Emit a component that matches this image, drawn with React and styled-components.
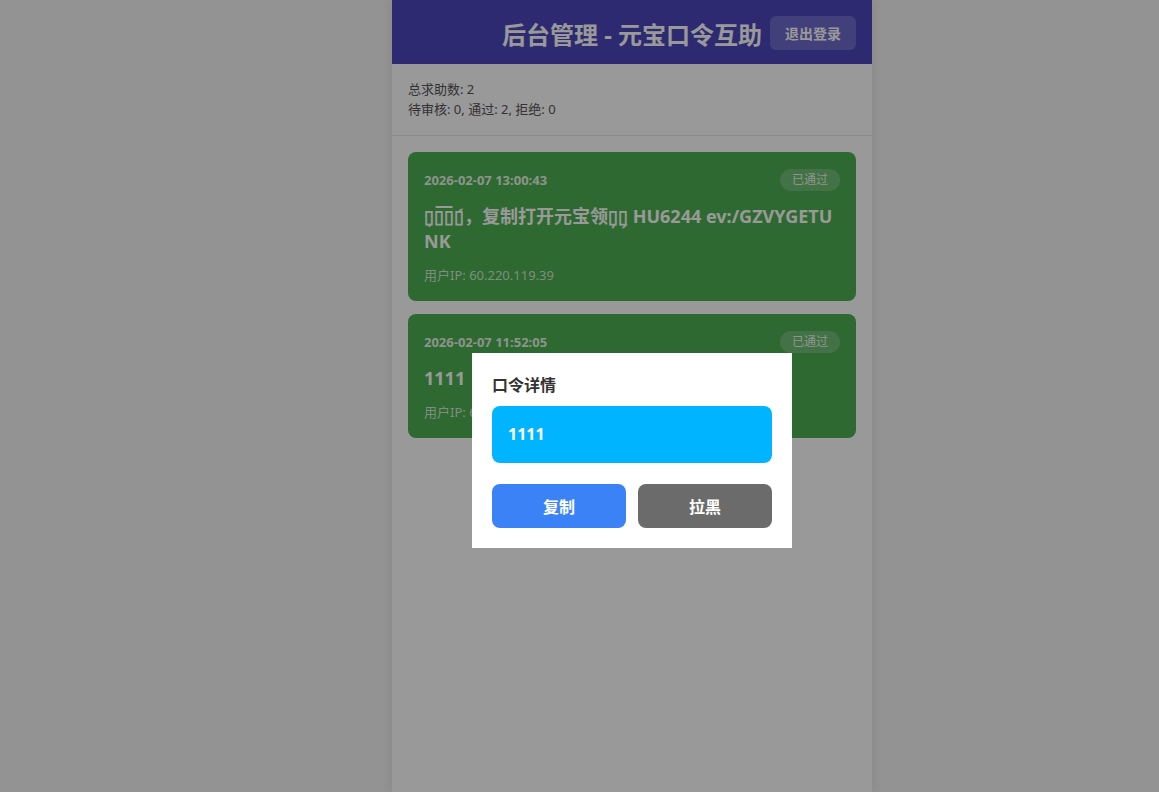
import React, { useState } from 'react';
import styled, { createGlobalStyle } from 'styled-components';

const GlobalStyle = createGlobalStyle`
  html, body {
    margin: 0;
    padding: 0;
    overflow: hidden;
    background: #f5f5f5;
  }
  * {
    box-sizing: border-box;
  }
  body {
    font-family: "Noto Sans", "Noto Sans CJK SC", sans-serif;
  }
`;

const requests = [
  {
    id: 1,
    time: '2026-02-07 13:00:43',
    content: '▯̣▯͞▯▯́，复制打开元宝领▯̦▯̗ HU6244 ev:/GZVYGETUNK',
    ip: '60.220.119.39',
    status: '已通过',
  },
  {
    id: 2,
    time: '2026-02-07 11:52:05',
    content: '1111',
    ip: '60.220.119.39',
    status: '已通过',
  },
];

const App = () => {
  const [selected, setSelected] = useState(requests[1]);

  return (
    <>
      <GlobalStyle />
      <Page>
        <Container>
          <Header>
            <Title>后台管理 - 元宝口令互助</Title>
            <LogoutButton>退出登录</LogoutButton>
          </Header>
          <Stats>
            <div>总求助数: 2</div>
            <div>待审核: 0, 通过: 2, 拒绝: 0</div>
          </Stats>
          <List>
            {requests.map((item) => (
              <Card key={item.id} onClick={() => setSelected(item)}>
                <CardTop>
                  <Time>{item.time}</Time>
                  <Badge>{item.status}</Badge>
                </CardTop>
                <Content>{item.content}</Content>
                <Ip>用户IP: {item.ip}</Ip>
              </Card>
            ))}
          </List>
        </Container>
      </Page>
      {selected && (
        <Overlay onClick={() => setSelected(null)}>
          <Modal onClick={(e) => e.stopPropagation()}>
            <ModalTitle>口令详情</ModalTitle>
            <CodeBox>{selected.content}</CodeBox>
            <Actions>
              <ActionButton $color="#3b82f6">复制</ActionButton>
              <ActionButton $color="#6b6b6b">拉黑</ActionButton>
            </Actions>
          </Modal>
        </Overlay>
      )}
    </>
  );
};

const Page = styled.div`
  width: 1264px;
  min-height: 100vh;
`;

const Container = styled.div`
  width: 480px;
  min-height: 100vh;
  margin: 0 auto;
  background: #fff;
  box-shadow: 0 0 10px rgba(0, 0, 0, 0.1);
`;

const Header = styled.div`
  position: relative;
  height: 64px;
  display: flex;
  align-items: center;
  justify-content: center;
  background: #4c46be;
  color: #fff;
`;

const Title = styled.h1`
  margin: 0;
  font-size: 24px;
  font-weight: 700;
  line-height: 32px;
  padding-top: 6px;
`;

const LogoutButton = styled.button`
  position: absolute;
  top: 16px;
  right: 16px;
  height: 34px;
  padding: 0 15px;
  border: none;
  border-radius: 6px;
  background: rgba(255, 255, 255, 0.2);
  color: #fff;
  font-family: inherit;
  font-size: 14px;
  font-weight: 700;
  cursor: pointer;
`;

const Stats = styled.div`
  padding: 15px 16px 16px;
  font-size: 13px;
  line-height: 20px;
  color: #555;
  border-bottom: 1px solid #e5e5e5;
`;

const List = styled.div`
  display: flex;
  flex-direction: column;
  gap: 13px;
  padding: 16px;
`;

const Card = styled.div`
  padding: 16px;
  border-radius: 8px;
  background: #4caf50;
  color: #fff;
  cursor: pointer;
`;

const CardTop = styled.div`
  display: flex;
  align-items: center;
  justify-content: space-between;
  height: 24px;
`;

const Time = styled.span`
  font-size: 13px;
  font-weight: 700;
  color: rgba(255, 255, 255, 0.9);
`;

const Badge = styled.span`
  padding: 2px 12px;
  border-radius: 12px;
  background: rgba(255, 255, 255, 0.2);
  font-size: 12px;
  line-height: 18px;
  color: rgba(255, 255, 255, 0.9);
`;

const Content = styled.div`
  margin-top: 12px;
  font-size: 18px;
  font-weight: 700;
  line-height: 25px;
  word-break: break-all;
`;

const Ip = styled.div`
  margin-top: 11px;
  font-size: 13px;
  line-height: 20px;
  color: rgba(255, 255, 255, 0.75);
`;

const Overlay = styled.div`
  position: fixed;
  top: 0;
  left: 0;
  width: 1264px;
  height: 901px;
  display: flex;
  align-items: center;
  justify-content: center;
  background: rgba(0, 0, 0, 0.4);
`;

const Modal = styled.div`
  width: 320px;
  padding: 20px;
  background: #fff;
`;

const ModalTitle = styled.h3`
  margin: 0 0 9px;
  font-size: 16px;
  font-weight: 600;
  line-height: 24px;
  color: #333;
`;

const CodeBox = styled.div`
  min-height: 57px;
  padding: 16px;
  border-radius: 8px;
  background: #00b4ff;
  color: #fff;
  font-size: 16px;
  font-weight: 700;
  line-height: 25px;
  word-break: break-all;
`;

const Actions = styled.div`
  display: grid;
  grid-template-columns: 1fr 1fr;
  gap: 12px;
  margin-top: 21px;
`;

const ActionButton = styled.button`
  height: 44px;
  border: none;
  border-radius: 8px;
  background: ${(p) => p.$color};
  color: #fff;
  font-family: inherit;
  font-size: 16px;
  font-weight: 700;
  cursor: pointer;
`;

export default App;
